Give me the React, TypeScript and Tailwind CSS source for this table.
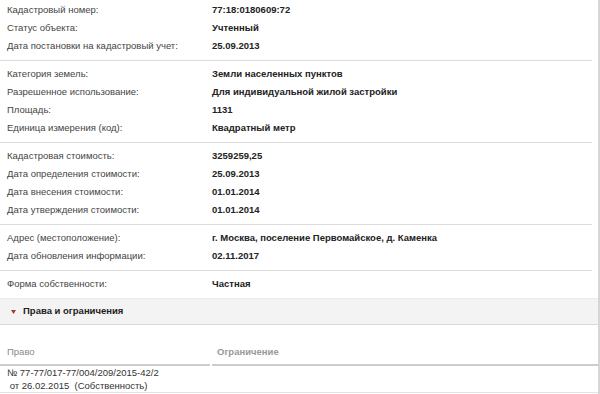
const groups: [string, string][][] = [
  [
    ["Кадастровый номер:", "77:18:0180609:72"],
    ["Статус объекта:", "Учтенный"],
    ["Дата постановки на кадастровый учет:", "25.09.2013"],
  ],
  [
    ["Категория земель:", "Земли населенных пунктов"],
    ["Разрешенное использование:", "Для индивидуальной жилой застройки"],
    ["Площадь:", "1131"],
    ["Единица измерения (код):", "Квадратный метр"],
  ],
  [
    ["Кадастровая стоимость:", "3259259,25"],
    ["Дата определения стоимости:", "25.09.2013"],
    ["Дата внесения стоимости:", "01.01.2014"],
    ["Дата утверждения стоимости:", "01.01.2014"],
  ],
  [
    ["Адрес (местоположение):", "г. Москва, поселение Первомайское, д. Каменка"],
    ["Дата обновления информации:", "02.11.2017"],
  ],
  [["Форма собственности:", "Частная"]],
];

export default function App() {
  return (
    <div
      className="w-[600px] h-[394px] overflow-hidden bg-white text-[9.5px] text-[#444]"
      style={{ fontFamily: '"Liberation Sans", Arial, sans-serif' }}
    >
      <div className="w-[600px] h-[394px] border-r-2 border-[#d6d6d6]">
        {groups.map((rows, gi) => (
          <div
            key={gi}
            className={
              gi === 0
                ? "mr-[6px] pt-px pb-[5px] border-b border-[#dcdcdc]"
                : gi === groups.length - 1
                ? "mr-[6px] pt-1 pb-[5px]"
                : "mr-[6px] pt-1 pb-[5px] border-b border-[#dcdcdc]"
            }
          >
            {rows.map(([label, value]) => (
              <div key={label} className="flex h-[18px] items-center">
                <div className="w-[212px] pl-[7px]">{label}</div>
                <div className="font-bold text-[#222]">{value}</div>
              </div>
            ))}
          </div>
        ))}

        <div className="flex h-[27px] items-center border-y border-t-[#ececec] border-b-[#d8d8d8] bg-[#f3f3f3] pl-[11px]">
          <svg width="5" height="4" viewBox="0 0 5 4" className="mr-[7px]">
            <path d="M0 0H5L2.5 4Z" fill="#a0412d" />
          </svg>
          <span className="font-bold text-[#222]">Права и ограничения</span>
        </div>

        <div className="flex gap-[2px]">
          <div className="w-[210px] pt-[20px] pb-[6px] pl-[7px] leading-[13px] text-[#8a8a8a] border-b-2 border-[#cdcdcd]">
            Право
          </div>
          <div className="flex-1 pt-[20px] pb-[6px] pl-[5px] leading-[13px] font-bold text-[#999] border-b-2 border-[#cdcdcd]">
            Ограничение
          </div>
        </div>
        <div className="border-b border-[#e2e2e2] pl-[7px] leading-[13px] whitespace-pre text-[#333]">
          <div>№ 77-77/017-77/004/209/2015-42/2</div>
          <div> от 26.02.2015  (Собственность)</div>
        </div>
      </div>
    </div>
  );
}
